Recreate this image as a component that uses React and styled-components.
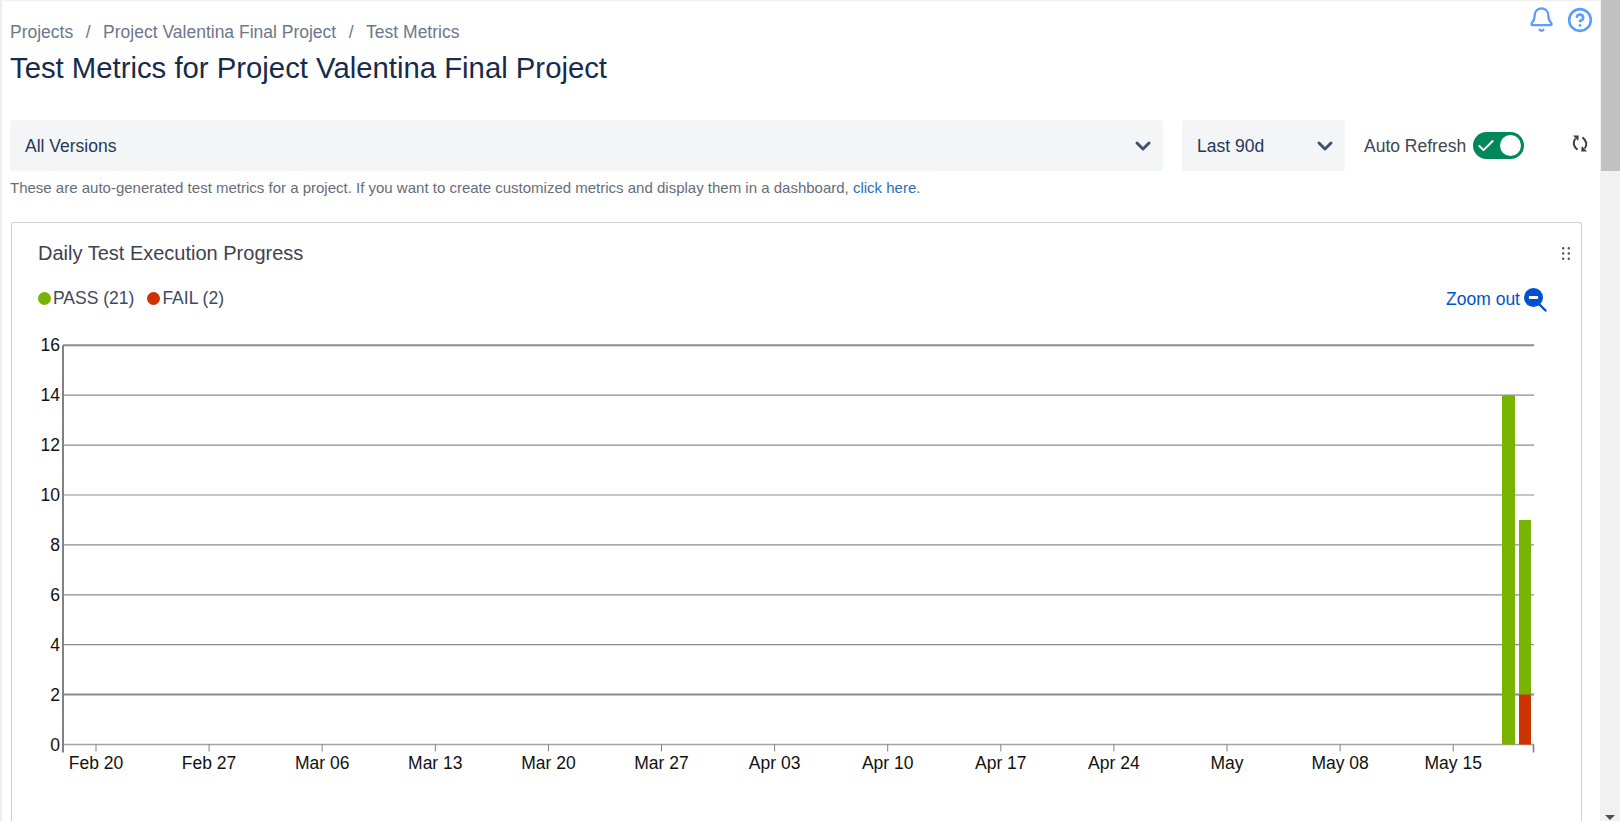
import React from "react";
import styled, { createGlobalStyle } from "styled-components";
import { Bell, ChevronDown, CircleHelp, Check } from "lucide-react";

const GlobalStyle = createGlobalStyle`
  html, body {
    margin: 0;
    padding: 0;
    height: 100%;
    overflow: hidden;
    background: #fff;
    font-family: "Liberation Sans", Arial, sans-serif;
  }
`;

const Shell = styled.div`
  display: flex;
  width: 1620px;
  height: 821px;
  overflow: hidden;
`;

const Main = styled.main`
  flex: 1;
  min-width: 0;
  box-sizing: border-box;
  height: 821px;
  overflow: hidden;
  padding: 0 18px 0 8px;
  border-left: 2px solid #eeeeee;
  box-shadow: inset 0 2px 2px -1px #eeeeee;
`;

const ScrollTrack = styled.div`
  width: 20px;
  display: flex;
  flex-direction: column;
  justify-content: space-between;
  align-items: flex-end;
  background: #f1f1f1;
`;

const ScrollThumb = styled.div`
  width: 19px;
  height: 171px;
  background: #c1c1c1;
`;

const ScrollArrow = styled.div`
  width: 0;
  height: 0;
  margin: 0 5px 1px 0;
  border-left: 5px solid transparent;
  border-right: 5px solid transparent;
  border-top: 5px solid #505050;
`;

const Header = styled.header`
  display: flex;
  justify-content: space-between;
  align-items: flex-start;
  height: 120px;
`;

const Breadcrumbs = styled.nav`
  display: flex;
  gap: 12.5px;
  padding-top: 23px;
  font-size: 17.5px;
  line-height: 19px;
  color: #6b778c;
`;

const Title = styled.h1`
  margin: 8px 0 0;
  font-size: 29.3px;
  line-height: 36px;
  font-weight: 400;
  color: #172b4d;
`;

const HeaderIcons = styled.div`
  display: flex;
  gap: 12px;
  padding-top: 6px;
  margin-right: -11px;
  color: #5c9dff;
`;

const HelpIcon = styled(CircleHelp)`
  margin-top: 1px;
`;

const Filters = styled.div`
  display: flex;
  align-items: center;
  height: 51px;
`;

const SelectBox = styled.div`
  box-sizing: border-box;
  flex-shrink: 0;
  width: ${(p) => p.$width}px;
  height: 51px;
  margin-right: 19px;
  padding: 1px 8px 0 15px;
  display: flex;
  align-items: center;
  justify-content: space-between;
  background: #f4f5f7;
  border-radius: 3px;
  font-size: 17.5px;
  color: #253858;
`;

const AutoRefresh = styled.span`
  flex-shrink: 0;
  padding-top: 1px;
  white-space: nowrap;
  font-size: 17.5px;
  color: #42464f;
  margin-right: 7px;
`;

const Toggle = styled.div`
  box-sizing: border-box;
  flex-shrink: 0;
  width: 51px;
  height: 27px;
  padding: 0 3px;
  display: flex;
  align-items: center;
  justify-content: space-between;
  border-radius: 14px;
  background: #00875a;
  color: #fff;
`;

const Knob = styled.span`
  width: 21px;
  height: 21px;
  border-radius: 50%;
  background: #fff;
`;

const RefreshButton = styled.div`
  margin-left: 48px;
  margin-top: -5px;
  display: flex;
  color: #3a3f47;
`;

const Note = styled.p`
  margin: 8px 0 0;
  height: 18px;
  font-size: 15px;
  line-height: 17px;
  white-space: nowrap;
  color: #666d78;
`;

const NoteLink = styled.a`
  color: #2a6ebb;
  text-decoration: none;
`;

const Card = styled.section`
  box-sizing: border-box;
  margin: 25px 0 0 1px;
  height: 640px;
  border: 1px solid #cfcfcf;
  border-bottom: 0;
  border-radius: 3px 3px 0 0;
  padding: 20px 11px 0 25px;
`;

const CardHeader = styled.div`
  display: flex;
  justify-content: space-between;
  align-items: center;
  height: 21px;
  padding-left: 1px;
`;

const CardTitle = styled.h2`
  margin: 0;
  font-size: 20px;
  font-weight: 400;
  color: #3d4350;
`;

const LegendRow = styled.div`
  display: flex;
  align-items: center;
  justify-content: space-between;
  margin: 22px 23px 0 0;
  padding-left: 1px;
  height: 24px;
`;

const Legend = styled.div`
  display: flex;
  gap: 13px;
`;

const LegendItem = styled.span`
  display: flex;
  align-items: center;
  gap: 2px;
  font-size: 17.5px;
  color: #3d4a63;
`;

const Dot = styled.i`
  width: 13px;
  height: 13px;
  border-radius: 50%;
  background: ${(p) => p.$color};
`;

const ZoomOut = styled.a`
  display: flex;
  align-items: center;
  gap: 4px;
  margin-top: 3px;
  font-size: 17.5px;
  color: #0052cc;
`;

const ChartWrap = styled.div`
  margin: 24px 0 0 -25px;
`;

const DragHandle = () => (
  <svg width="8" height="13" viewBox="0 0 8 13" fill="#555">
    {[1.2, 6.5, 11.8].map((y) =>
      [1.2, 6.8].map((x) => <circle key={`${x}-${y}`} cx={x} cy={y} r="1.2" />)
    )}
  </svg>
);

const RefreshIcon = () => (
  <svg width="16" height="17" viewBox="0 0 16 17" fill="none" stroke="currentColor" strokeWidth="2">
    <path d="M3.4 3.5 C0.6 7 1.2 11.5 5.6 14.6" />
    <path d="M12.6 13.5 C15.4 10 14.8 5.5 10.4 2.4" />
    <polygon points="1,0.6 6.8,0.6 6.2,6" fill="currentColor" stroke="none" />
    <polygon points="15,16.4 9.2,16.4 9.8,11" fill="currentColor" stroke="none" />
  </svg>
);

const ZoomIcon = () => (
  <svg width="23" height="24" viewBox="0 0 23 24">
    <path d="M15 16 L21.5 22.5" stroke="#0052cc" strokeWidth="2.4" strokeLinecap="round" />
    <circle cx="9.5" cy="9.5" r="9.5" fill="#0052cc" />
    <rect x="4.8" y="8" width="9.4" height="3" rx="1" fill="#fff" />
  </svg>
);

const ticks = ["Feb 20", "Feb 27", "Mar 06", "Mar 13", "Mar 20", "Mar 27", "Apr 03", "Apr 10", "Apr 17", "Apr 24", "May", "May 08", "May 15"];
const yValues = [0, 2, 4, 6, 8, 10, 12, 14, 16];
const heavy = [2, 16];

// svg origin sits at the card's inner left edge: page x 12, page y 334
const OX = 12;
const OY = 334;

const Chart = () => {
  const yOf = (v) => 744.5 - OY - v * 24.95;
  const left = 63 - OX;
  const right = 1534 - OX;
  return (
    <svg width="1558" height="460" style={{ display: "block" }}>
      {yValues.filter((v) => v > 0).map((v) => (
        <line
          key={v}
          x1={left}
          x2={right}
          y1={yOf(v)}
          y2={yOf(v)}
          stroke="#8c8c8c"
          strokeWidth={heavy.includes(v) ? 2 : 1.2}
        />
      ))}
      <line x1={left} x2={right} y1={yOf(0)} y2={yOf(0)} stroke="#a3a3a3" strokeWidth="1.4" />
      <line x1={left} x2={left} y1={yOf(16)} y2={yOf(0) + 8} stroke="#828282" strokeWidth="2" />
      <line x1={right - 0.5} x2={right - 0.5} y1={yOf(0)} y2={yOf(0) + 8} stroke="#828282" strokeWidth="1.6" />
      {yValues.map((v) => (
        <text key={v} x={left - 3} y={yOf(v) + 6} textAnchor="end" fontSize="17.5" fill="#111">
          {v}
        </text>
      ))}
      {ticks.map((t, i) => {
        const x = 96 - OX + i * 113.1;
        return (
          <g key={t}>
            <line x1={x} x2={x} y1={yOf(0)} y2={yOf(0) + 7} stroke="#828282" />
            <text x={x} y={yOf(0) + 24.5} textAnchor="middle" fontSize="17.5" fill="#111">
              {t}
            </text>
          </g>
        );
      })}
      <rect x={1502 - OX} y={yOf(14)} width="13" height={14 * 24.95} fill="#77b300" />
      <rect x={1519 - OX} y={yOf(9)} width="12" height={7 * 24.95} fill="#77b300" />
      <rect x={1519 - OX} y={yOf(2)} width="12" height={2 * 24.95} fill="#cc3300" />
    </svg>
  );
};

function App() {
  return (
    <Shell>
      <GlobalStyle />
      <Main>
        <Header>
          <div>
            <Breadcrumbs>
              <span>Projects</span>
              <span>/</span>
              <span>Project Valentina Final Project</span>
              <span>/</span>
              <span>Test Metrics</span>
            </Breadcrumbs>
            <Title>Test Metrics for Project Valentina Final Project</Title>
          </div>
          <HeaderIcons>
            <Bell size={27} strokeWidth={2} />
            <HelpIcon size={26} strokeWidth={2.4} />
          </HeaderIcons>
        </Header>
        <Filters>
          <SelectBox $width={1153}>
            All Versions
            <ChevronDown size={24} strokeWidth={3} color="#42526e" />
          </SelectBox>
          <SelectBox $width={163}>
            Last 90d
            <ChevronDown size={24} strokeWidth={3} color="#42526e" />
          </SelectBox>
          <AutoRefresh>Auto Refresh</AutoRefresh>
          <Toggle>
            <Check size={20} strokeWidth={2.4} />
            <Knob />
          </Toggle>
          <RefreshButton>
            <RefreshIcon />
          </RefreshButton>
        </Filters>
        <Note>
          These are auto-generated test metrics for a project. If you want to create customized metrics and display them in a dashboard,{" "}
          <NoteLink>click here</NoteLink>.
        </Note>
        <Card>
          <CardHeader>
            <CardTitle>Daily Test Execution Progress</CardTitle>
            <DragHandle />
          </CardHeader>
          <LegendRow>
            <Legend>
              <LegendItem>
                <Dot $color="#77b300" />
                PASS (21)
              </LegendItem>
              <LegendItem>
                <Dot $color="#cc3300" />
                FAIL (2)
              </LegendItem>
            </Legend>
            <ZoomOut>
              Zoom out
              <ZoomIcon />
            </ZoomOut>
          </LegendRow>
          <ChartWrap>
            <Chart />
          </ChartWrap>
        </Card>
      </Main>
      <ScrollTrack>
        <ScrollThumb />
        <ScrollArrow />
      </ScrollTrack>
    </Shell>
  );
}

export default App;
